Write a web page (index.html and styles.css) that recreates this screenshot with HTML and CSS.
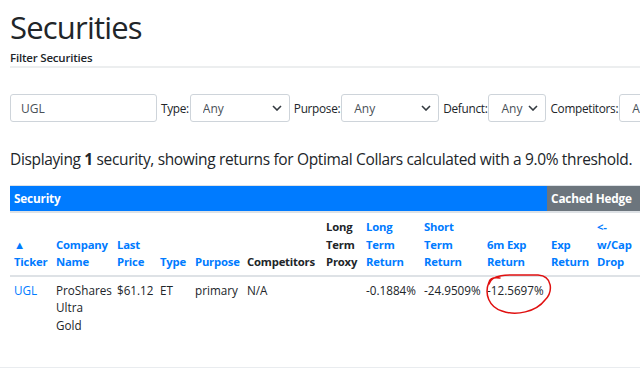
FILE: index.html
```html
<!DOCTYPE html>
<html lang="en">
<head>
    <meta charset="UTF-8">
    <title>Securities</title>
    <link rel="stylesheet" href="styles.css">
</head>
<body>
    <div class="page">
        <h1 class="title">Securities</h1>
        <div class="filter-head">Filter Securities</div>

        <div class="filters">
            <input type="text" class="search" value="UGL">
            <label>Type:</label>
            <div class="select-wrap w-type">
                <select><option>Any</option></select>
                <svg class="chev" viewBox="0 0 10 6"><path d="M1 1l4 4 4-4" fill="none" stroke="#343a40" stroke-width="1.6"/></svg>
            </div>
            <label>Purpose:</label>
            <div class="select-wrap w-purpose">
                <select><option>Any</option></select>
                <svg class="chev" viewBox="0 0 10 6"><path d="M1 1l4 4 4-4" fill="none" stroke="#343a40" stroke-width="1.6"/></svg>
            </div>
            <label>Defunct:</label>
            <div class="select-wrap w-defunct">
                <select><option>Any</option></select>
                <svg class="chev" viewBox="0 0 10 6"><path d="M1 1l4 4 4-4" fill="none" stroke="#343a40" stroke-width="1.6"/></svg>
            </div>
            <label>Competitors:</label>
            <div class="select-wrap w-comp">
                <select><option>Any</option></select>
            </div>
        </div>

        <p class="summary">Displaying <b>1</b> security, showing returns for Optimal Collars calculated with a 9.0% threshold.</p>

        <div class="table-wrap">
            <table class="sec-table">
                <colgroup>
                    <col style="width:42px"><col style="width:61px"><col style="width:43px"><col style="width:35px">
                    <col style="width:52px"><col style="width:79px"><col style="width:40px"><col style="width:58px">
                    <col style="width:63px"><col style="width:64px"><col style="width:46px"><col style="width:60px">
                </colgroup>
                <thead>
                    <tr class="group-row">
                        <th colspan="10" class="grp-blue">Security</th>
                        <th colspan="2" class="grp-grey">Cached Hedge</th>
                    </tr>
                    <tr class="col-row">
                        <th class="link">▲<br>Ticker</th>
                        <th class="link">Company<br>Name</th>
                        <th class="link">Last<br>Price</th>
                        <th class="link">Type</th>
                        <th class="link">Purpose</th>
                        <th>Competitors</th>
                        <th>Long<br>Term<br>Proxy</th>
                        <th class="link">Long<br>Term<br>Return</th>
                        <th class="link">Short<br>Term<br>Return</th>
                        <th class="link">6m Exp<br>Return</th>
                        <th class="link">Exp<br>Return</th>
                        <th class="link">&lt;-<br>w/Cap<br>Drop</th>
                    </tr>
                </thead>
                <tbody>
                    <tr>
                        <td><a href="#">UGL</a></td>
                        <td>ProShares Ultra Gold</td>
                        <td>$61.12</td>
                        <td>ET</td>
                        <td>primary</td>
                        <td>N/A</td>
                        <td></td>
                        <td>-0.1884%</td>
                        <td>-24.9509%</td>
                        <td>-12.5697%</td>
                        <td></td>
                        <td></td>
                    </tr>
                </tbody>
            </table>
            <svg class="scribble" viewBox="0 0 80 50" width="80" height="50">
                <path d="M9 14 C12 1, 40 6, 58 5 C73 6, 73 22, 65 30 C56 42, 36 46, 22 41 C9 37, 4 24, 9 12 C10 8, 14 7, 20 8" fill="none" stroke="#e01010" stroke-width="1.5" stroke-linecap="round"/>
            </svg>
        </div>
    </div>
    <div class="bottom-line"></div>
</body>
</html>
```

FILE: styles.css
```css
body {
    margin: 0;
    font-family: "Segoe UI", "Open Sans", sans-serif;
    color: #212529;
    background: #fff;
    overflow: hidden;
    height: 369px;
    position: relative;
}
.page {
    padding: 0 0 0 10px;
}
.title {
    font-size: 31px;
    font-weight: 500;
    letter-spacing: -0.8px;
    line-height: 1.2;
    margin: 9px 0 0;
}
.filter-head {
    font-size: 11.5px;
    font-weight: 600;
    letter-spacing: -0.2px;
    padding-bottom: 1px;
    margin-top: 4px;
    border-bottom: 2px solid #eceeef;
}
.filters {
    display: flex;
    align-items: center;
    margin-top: 26px;
    white-space: nowrap;
    font-size: 12px;
    letter-spacing: -0.2px;
}
.filters label {
    margin: 0 1px 0 4px;
    font-size: 11.8px;
    letter-spacing: -0.3px;
}
.search {
    width: 147px;
    height: 28px;
    box-sizing: border-box;
    border: 1px solid #ced4da;
    border-radius: 3px;
    padding: 0 10px;
    font: inherit;
    color: #495057;
}
.select-wrap {
    position: relative;
    flex: none;
}
.select-wrap select {
    appearance: none;
    width: 100%;
    height: 28px;
    border: 1px solid #ced4da;
    border-radius: 3px;
    background: #fff;
    padding: 0 12px;
    font: inherit;
    color: #495057;
}
.chev {
    position: absolute;
    right: 8px;
    top: 11px;
    width: 10px;
    height: 6px;
}
.w-type { width: 100px; }
.w-purpose { width: 98px; }
.w-defunct { width: 58px; }
.w-comp { width: 60px; }
.summary {
    font-size: 15.5px;
    font-weight: 500;
    letter-spacing: -0.35px;
    margin: 27px 0 0;
    line-height: 1.4;
    white-space: nowrap;
}
.table-wrap {
    position: relative;
    margin-top: 14px;
}
.sec-table {
    table-layout: fixed;
    border-collapse: collapse;
    width: 643px;
    font-size: 11.7px;
    line-height: 17.5px;
}
.sec-table th,
.sec-table td {
    padding: 4px;
    text-align: left;
    vertical-align: bottom;
}
.group-row th {
    color: #fff;
    font-weight: 700;
    font-size: 11.8px;
    letter-spacing: -0.2px;
    padding: 4px 4px 4px;
    border-top: 1px solid #dee2e6;
    border-bottom: 2px solid #dee2e6;
}
.grp-blue { background: #007bff; }
.grp-grey { background: #6c757d; }
.col-row th {
    font-weight: 700;
    font-size: 11.3px;
    letter-spacing: -0.2px;
    padding-top: 5px;
    padding-bottom: 4px;
    border-bottom: 2px solid #dee2e6;
}
.col-row .link {
    color: #007bff;
}
.sec-table td {
    vertical-align: top;
    padding-top: 5px;
    height: 80px;
    color: #212529;
}
.sec-table td a {
    color: #007bff;
    text-decoration: none;
}
.scribble {
    position: absolute;
    left: 470px;
    top: 85px;
}
.bottom-line {
    position: absolute;
    left: 0;
    right: 0;
    top: 367px;
    border-top: 1px solid #e9ecef;
}
```
